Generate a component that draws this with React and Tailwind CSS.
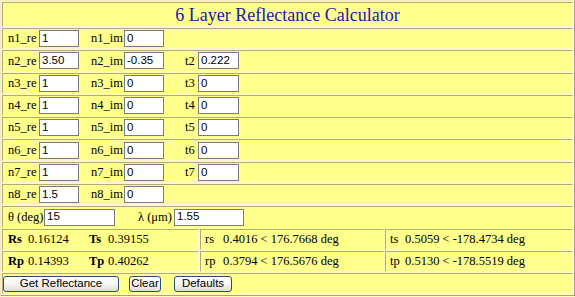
import React from 'react'

const serif = { fontFamily: '"Liberation Serif", "Times New Roman", serif' }
const sans = { fontFamily: '"Liberation Sans", Arial, sans-serif' }

const cell = 'bg-[#ffff8c] border border-t-[#b3a97a] border-l-[#b3a97a] border-b-[#fbf6cf] border-r-[#fbf6cf]'

const Field = ({ value, width }) => (
  <input
    readOnly
    value={value}
    style={sans}
    className={`${width} h-[17px] bg-white border border-[#7b7b7b] px-[2px] text-[11.5px] text-black outline-none`}
  />
)

const layers = [
  { n: 1, re: '1', im: '0' },
  { n: 2, re: '3.50', im: '-0.35', t: '0.222' },
  { n: 3, re: '1', im: '0', t: '0' },
  { n: 4, re: '1', im: '0', t: '0' },
  { n: 5, re: '1', im: '0', t: '0' },
  { n: 6, re: '1', im: '0', t: '0' },
  { n: 7, re: '1', im: '0', t: '0' },
  { n: 8, re: '1.5', im: '0' },
]

const LayerRow = ({ n, re, im, t }) => (
  <div className={`${cell} h-[21.3px] flex items-center pl-[5px] text-[12.5px] text-black`} style={serif}>
    <span className="w-[31px]">n{n}_re</span>
    <Field value={re} width="w-[40px]" />
    <span className="ml-[12px] w-[33px]">n{n}_im</span>
    <Field value={im} width="w-[40px]" />
    {t !== undefined && (
      <>
        <span className="ml-[21px] w-[13px]">t{n}</span>
        <Field value={t} width="w-[41px]" />
      </>
    )}
  </div>
)

const Btn = ({ children, className }) => (
  <button
    style={sans}
    className={`h-[16px] rounded-[3px] border border-[#2b4f7a] bg-gradient-to-b from-white via-[#f6f6f2] to-[#dcdcd4] text-[11.5px] leading-none text-black ${className}`}
  >
    {children}
  </button>
)

export default function App() {
  return (
    <div className="w-[575px] h-[297px] bg-[#fffcb8] overflow-hidden">
      <div className="w-[575px] border border-t-[#f3ecc0] border-l-[#f3ecc0] border-b-[#aaa07a] border-r-[#aaa07a] p-[1px] flex flex-col gap-[1px]">
        <div className={`${cell} h-[25px] flex items-center justify-center`}>
          <span className="text-[18px] text-[#1a1aa6] leading-none" style={serif}>
            6 Layer Reflectance Calculator
          </span>
        </div>

        {layers.map((l) => (
          <LayerRow key={l.n} {...l} />
        ))}

        <div className={`${cell} h-[21.3px] flex items-center pl-[5px] text-[12.5px] text-black`} style={serif}>
          <span className="w-[36px]">θ (deg)</span>
          <Field value="15" width="w-[71px]" />
          <span className="ml-[23px] w-[36px]">λ (μm)</span>
          <Field value="1.55" width="w-[70px]" />
        </div>

        {[
          { a: 'Rs', av: '0.16124', b: 'Ts', bv: '0.39155', c: 'rs', cv: '0.4016 < 176.7668 deg', d: 'ts', dv: '0.5059 < -178.4734 deg' },
          { a: 'Rp', av: '0.14393', b: 'Tp', bv: '0.40262', c: 'rp', cv: '0.3794 < 176.5676 deg', d: 'tp', dv: '0.5130 < -178.5519 deg' },
        ].map((r) => (
          <div key={r.a} className="grid grid-cols-[197px_184px_188px] gap-[1px] h-[21.3px] text-[12.5px] text-black" style={serif}>
            <div className={`${cell} flex items-center pl-[5px]`}>
              <span className="w-[20px] font-bold">{r.a}</span>
              <span className="w-[61px]">{r.av}</span>
              <span className="w-[19px] font-bold">{r.b}</span>
              <span>{r.bv}</span>
            </div>
            <div className={`${cell} flex items-center pl-[4px]`}>
              <span className="w-[18px]">{r.c}</span>
              <span>{r.cv}</span>
            </div>
            <div className={`${cell} flex items-center pl-[4px]`}>
              <span className="w-[15px]">{r.d}</span>
              <span>{r.dv}</span>
            </div>
          </div>
        ))}

        <div className={`${cell} h-[21px] flex items-center pl-0`}>
          <Btn className="w-[116px]">Get Reflectance</Btn>
          <Btn className="ml-[10px] w-[32px]">Clear</Btn>
          <Btn className="ml-[13px] w-[58px]">Defaults</Btn>
        </div>
      </div>
    </div>
  )
}
